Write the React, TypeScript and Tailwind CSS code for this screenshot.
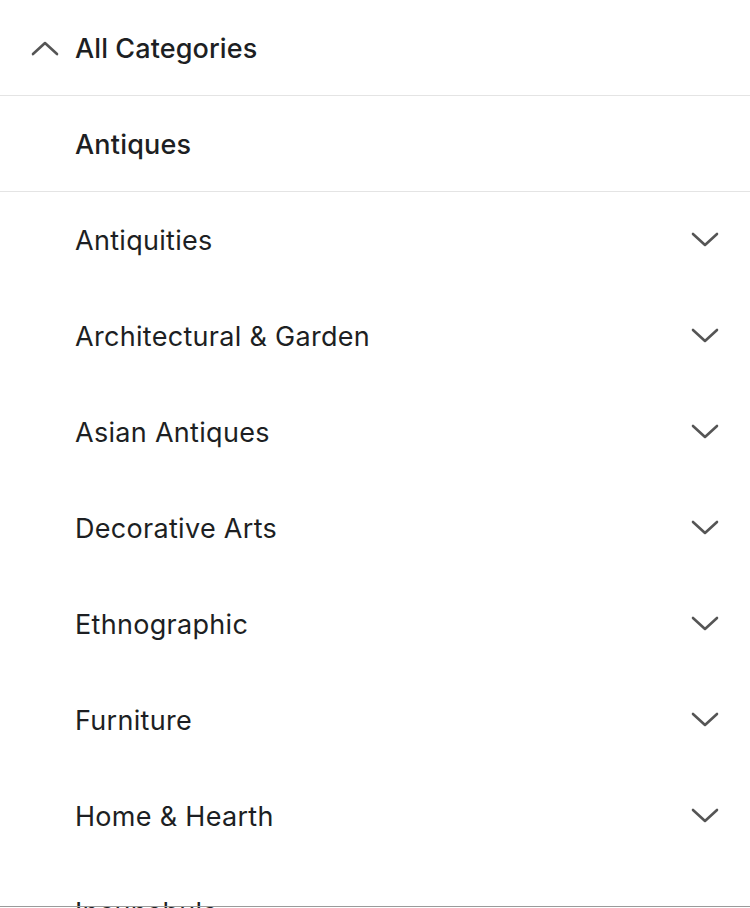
const categories = [
  'Antiquities',
  'Architectural & Garden',
  'Asian Antiques',
  'Decorative Arts',
  'Ethnographic',
  'Furniture',
  'Home & Hearth',
];

function Chevron({ up = false }: { up?: boolean }) {
  return (
    <svg width="28" height="16" viewBox="0 0 28 16" fill="none" className="shrink-0">
      <path
        d={up ? 'M2 14 L14 3 L26 14' : 'M2 2 L14 13 L26 2'}
        stroke="#555555"
        strokeWidth="2.6"
        strokeLinecap="round"
        strokeLinejoin="round"
      />
    </svg>
  );
}

export default function App() {
  return (
    <div
      className="relative h-[908px] w-[750px] overflow-hidden bg-white text-[#1d1f23]"
      style={{ fontFamily: 'Inter, "Noto Sans", sans-serif' }}
    >
      <div className="flex h-[96px] items-center gap-[16px] border-b border-[#e4e4e4] pl-[31px]">
        <Chevron up />
        <span className="pt-[3px] text-[27px] font-medium tracking-[0.1px]">All Categories</span>
      </div>
      <div className="flex h-[96px] items-center border-b border-[#e4e4e4] pl-[75px]">
        <span className="pt-[3px] text-[27px] font-medium tracking-[0.2px]">Antiques</span>
      </div>
      <ul>
        {categories.map((c) => (
          <li key={c} className="flex h-[96px] items-center justify-between pl-[75px] pr-[31px]">
            <span className="pt-[3px] text-[27px] tracking-[0.3px]">{c}</span>
            <Chevron />
          </li>
        ))}
        {/* last row has no sub-categories */}
        <li className="flex h-[96px] items-center pl-[75px]">
          <span className="pt-[3px] text-[27px] tracking-[0.3px]">Incunabula</span>
        </li>
      </ul>
      <div className="absolute bottom-[1px] left-0 right-0 h-[1px] bg-[#9a9a9a]" />
    </div>
  );
}
